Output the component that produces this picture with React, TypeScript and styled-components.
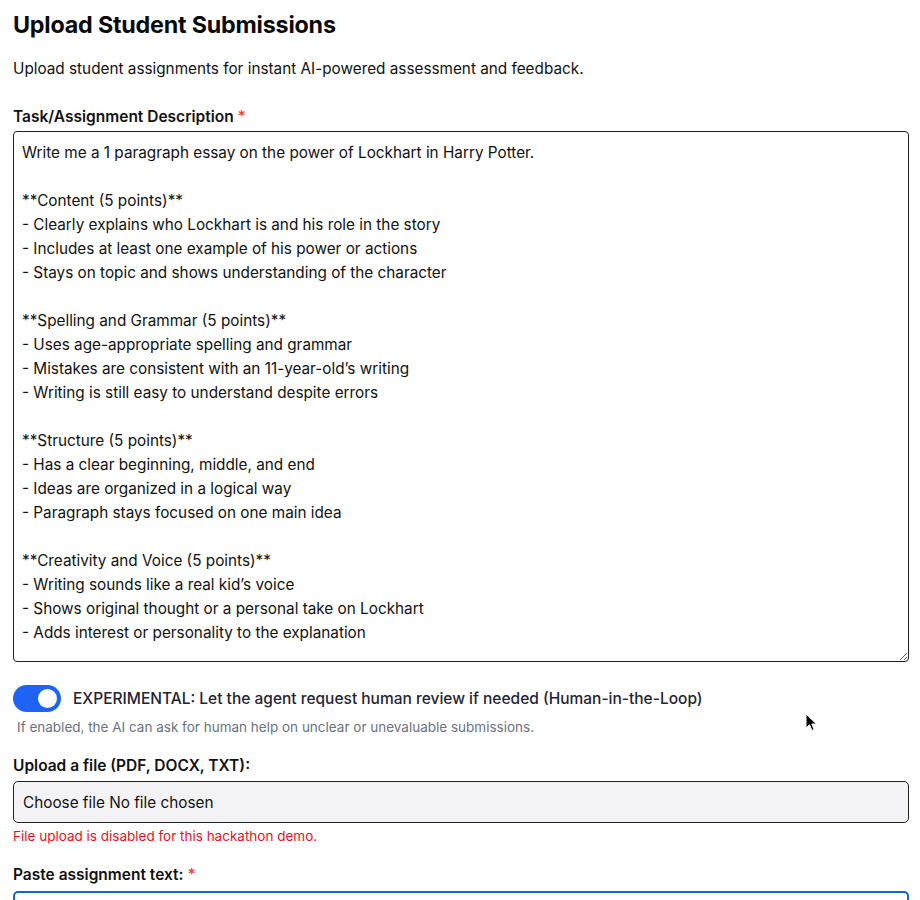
import React from "react";
import styled, { createGlobalStyle } from "styled-components";

const Global = createGlobalStyle`
  html, body { margin: 0; padding: 0; background: #fff; }
  body { font-family: Inter, "Noto Sans", "Liberation Sans", sans-serif; color: #111; }
  * { box-sizing: border-box; }
`;

const Page = styled.div`
  position: relative;
  padding: 10px 12px 0 13px;
  width: 920px;
  height: 900px;
  overflow: hidden;
`;

const Title = styled.h1`
  margin: 0;
  font-size: 23.3px;
  font-weight: 700;
  line-height: 30px;
  letter-spacing: -0.2px;
  color: #0a0a0a;
`;

const Lead = styled.p`
  margin: 17px 0 0;
  font-size: 15.3px;
  line-height: 24px;
  color: #111;
`;

const Label = styled.label<{ $top?: number }>`
  display: block;
  margin-top: ${(p) => p.$top ?? 22}px;
  font-size: 15.5px;
  font-weight: 600;
  line-height: 24px;
  color: #111;
`;

const Req = styled.span`
  color: #ef4444;
`;

const TextArea = styled.textarea`
  display: block;
  width: 896px;
  height: 531px;
  margin-top: 2px;
  padding: 9px 8px;
  border: 1px solid #222;
  border-radius: 4px;
  font-family: inherit;
  font-size: 15.3px;
  line-height: 24px;
  color: #111;
  resize: vertical;
  outline: none;
`;

const ToggleRow = styled.div`
  display: flex;
  align-items: center;
  gap: 12px;
  margin-top: 23px;
`;

const Switch = styled.span<{ $on: boolean }>`
  position: relative;
  flex: none;
  width: 48px;
  height: 27px;
  border-radius: 14px;
  background: ${(p) => (p.$on ? "#1f63f5" : "#d1d5db")};
`;

const Knob = styled.span`
  position: absolute;
  top: 4px;
  right: 4px;
  width: 19px;
  height: 19px;
  border-radius: 50%;
  background: #fff;
`;

const ToggleText = styled.span`
  font-size: 15.5px;
  font-weight: 500;
  color: #1f2433;
`;

const Help = styled.p`
  margin: 6px 0 0 4px;
  font-size: 13.5px;
  line-height: 18px;
  color: #6b7280;
`;

const FileBox = styled.div`
  display: flex;
  align-items: center;
  width: 896px;
  height: 42px;
  margin-top: 3px;
  padding: 0 9px;
  background: #f3f3f5;
  border: 1px solid #222;
  border-radius: 5px;
  font-size: 15.3px;
  color: #111;
`;

const Error = styled.p`
  margin: 4px 0 0;
  font-size: 13.5px;
  line-height: 18px;
  color: #e5121f;
`;

const NextInput = styled.div`
  width: 896px;
  height: 30px;
  margin-top: 4px;
  border: 2px solid #1565d8;
  border-bottom: none;
  border-radius: 5px 5px 0 0;
`;

const Cursor = styled.svg`
  position: absolute;
  left: 805px;
  top: 713px;
`;

const essay = `Write me a 1 paragraph essay on the power of Lockhart in Harry Potter.

**Content (5 points)**
- Clearly explains who Lockhart is and his role in the story
- Includes at least one example of his power or actions
- Stays on topic and shows understanding of the character

**Spelling and Grammar (5 points)**
- Uses age-appropriate spelling and grammar
- Mistakes are consistent with an 11-year-old’s writing
- Writing is still easy to understand despite errors

**Structure (5 points)**
- Has a clear beginning, middle, and end
- Ideas are organized in a logical way
- Paragraph stays focused on one main idea

**Creativity and Voice (5 points)**
- Writing sounds like a real kid’s voice
- Shows original thought or a personal take on Lockhart
- Adds interest or personality to the explanation`;

export default function App() {
  return (
    <Page>
      <Global />
      <Title>Upload Student Submissions</Title>
      <Lead>Upload student assignments for instant AI-powered assessment and feedback.</Lead>
      <Label $top={24}>
        Task/Assignment Description <Req>*</Req>
      </Label>
      <TextArea defaultValue={essay} />
      <ToggleRow>
        <Switch $on>
          <Knob />
        </Switch>
        <ToggleText>
          EXPERIMENTAL: Let the agent request human review if needed (Human-in-the-Loop)
        </ToggleText>
      </ToggleRow>
      <Help>If enabled, the AI can ask for human help on unclear or unevaluable submissions.</Help>
      <Label $top={18}>Upload a file (PDF, DOCX, TXT):</Label>
      <FileBox>Choose file No file chosen</FileBox>
      <Error>File upload is disabled for this hackathon demo.</Error>
      <Label $top={18}>
        Paste assignment text: <Req>*</Req>
      </Label>
      <NextInput />
      <Cursor width="14" height="20" viewBox="0 0 14 20">
        <path d="M1 1 L1 15 L4.5 11.8 L7 17.5 L9.2 16.5 L6.8 11 L11.5 11 Z" fill="#000" stroke="#fff" strokeWidth="1" />
      </Cursor>
    </Page>
  );
}
